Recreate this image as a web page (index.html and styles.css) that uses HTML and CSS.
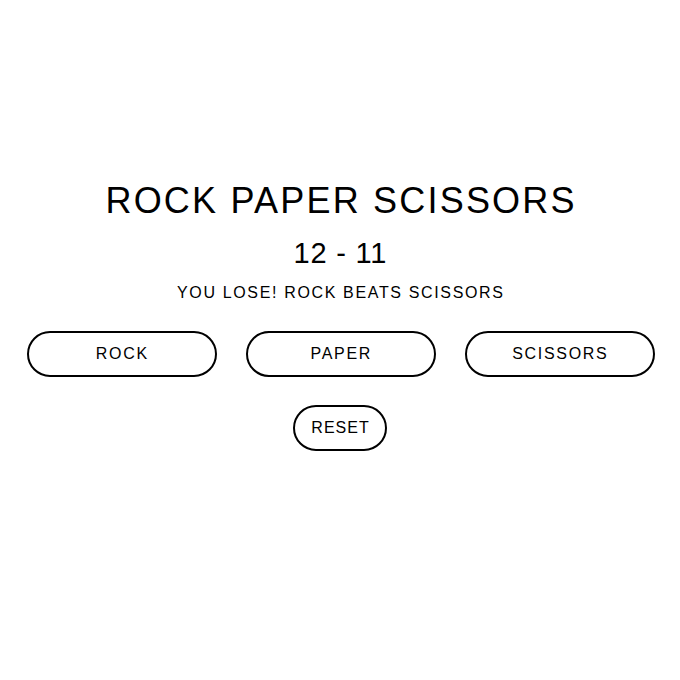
FILE: index.html
```html
<!DOCTYPE html>
<html>
<head>
<meta charset="utf-8">
<link rel="stylesheet" href="styles.css">
</head>
<body>
<main class="game">
  <h1 class="title">ROCK PAPER SCISSORS</h1>
  <div class="score">12 - 11</div>
  <p class="message">YOU LOSE! ROCK BEATS SCISSORS</p>
  <div class="choices">
    <button class="btn choice">ROCK</button>
    <button class="btn choice">PAPER</button>
    <button class="btn choice">SCISSORS</button>
  </div>
  <button class="btn reset">RESET</button>
</main>
</body>
</html>
```
FILE: styles.css
```css
html, body {
  margin: 0;
  padding: 0;
  background: #fff;
}
body {
  font-family: "Liberation Sans", Arial, sans-serif;
  color: #000;
}
.game {
  display: flex;
  flex-direction: column;
  align-items: center;
  padding-top: 181px;
}
.title {
  margin: 0;
  font-size: 36px;
  font-weight: 400;
  line-height: 40px;
  letter-spacing: 2.2px;
  padding-left: 2.2px;
}
.score {
  margin-top: 16px;
  font-size: 29px;
  line-height: 32px;
  letter-spacing: 0.8px;
  padding-left: 0.8px;
}
.message {
  margin: 14px 0 0;
  font-size: 16px;
  line-height: 20px;
  letter-spacing: 1.65px;
  padding-left: 1.65px;
}
.choices {
  display: flex;
  gap: 29px;
  margin-top: 28px;
  padding-left: 1px;
}
.btn {
  font-family: "Liberation Sans", Arial, sans-serif;
  font-size: 16px;
  line-height: 18px;
  color: #000;
  background: #fff;
  border: 2px solid #000;
  border-radius: 30px;
  padding: 12px 0;
  cursor: pointer;
}
.choice {
  width: 190px;
  height: 46px;
  letter-spacing: 1.7px;
  text-indent: 1.7px;
}
.reset {
  margin-top: 28px;
  width: 94px;
  height: 46px;
  letter-spacing: 1px;
  text-indent: 1px;
}
```
